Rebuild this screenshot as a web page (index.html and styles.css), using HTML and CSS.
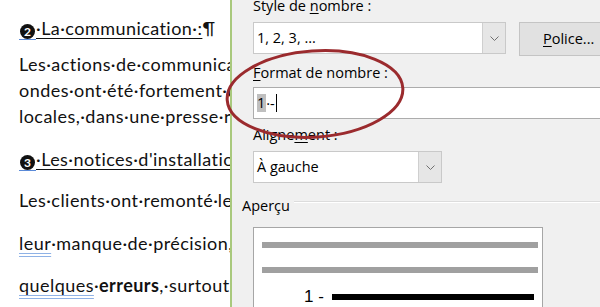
FILE: index.html
```html
<!DOCTYPE html>
<html lang="fr">
<head>
<meta charset="utf-8">
<title>Format de nombre</title>
<link rel="stylesheet" href="styles.css">
</head>
<body>
<div class="page">
  <div class="doc">
    <p class="head"><span class="ul"><span class="spell"><span class="num">2</span></span>·La·communication·:</span>¶</p>
    <div class="para first">
      <p>Les·actions·de·communication·ont·été·menées</p>
      <p>ondes·ont·été·fortement·diffusées·sur·les·radios</p>
      <p>locales,·dans·une·presse·régionale</p>
    </div>
    <p class="head h3"><span class="ul"><span class="spell"><span class="num">3</span></span>·Les·notices·d'installation·:</span>¶</p>
    <p class="para">Les·clients·ont·remonté·les·problèmes</p>
    <p class="para p2"><span class="gram">leur</span>·manque·de·précision,·sur·les</p>
    <p class="para p3"><span class="gram">quelques</span>·<b>erreurs</b>,·surtout·dans·les</p>
  </div>
  <div class="rule"></div>
  <div class="dialog">
    <div class="label l1">Style de <u>n</u>ombre :</div>
    <div class="row1">
      <div class="select s1">
        <span class="val">1, 2, 3, ...</span>
        <span class="arrow"><svg width="9" height="5" viewBox="0 0 9 5"><polyline points="0.5,0.5 4.5,4.5 8.5,0.5" fill="none" stroke="#707070" stroke-width="1"/></svg></span>
      </div>
      <div class="btn"><u>P</u>olice...</div>
    </div>
    <div class="label l2"><u>F</u>ormat de nombre :</div>
    <div class="input"><span class="sel">1</span><span class="dot">·</span>-<span class="caret"></span></div>
    <div class="label l3">Aligne<u>m</u>ent :</div>
    <div class="select s2">
      <span class="val">À gauche</span>
      <span class="arrow"><svg width="9" height="5" viewBox="0 0 9 5"><polyline points="0.5,0.5 4.5,4.5 8.5,0.5" fill="none" stroke="#707070" stroke-width="1"/></svg></span>
    </div>
    <div class="group"><span class="legend">Aperçu</span><span class="gline"></span></div>
    <div class="preview">
      <div class="bar"></div>
      <div class="bar"></div>
      <div class="numrow"><span class="n">1 -</span><span class="blackbar"></span></div>
    </div>
  </div>
  <svg class="ellipse" width="600" height="307" viewBox="0 0 600 307">
    <ellipse cx="315" cy="94" rx="88" ry="43" transform="rotate(-4 315 94)" fill="none" stroke="#9b2b2e" stroke-width="3"/>
  </svg>
</div>
</body>
</html>
```
FILE: styles.css
```css
html, body {
  margin: 0;
  padding: 0;
}
body {
  width: 600px;
  height: 307px;
  overflow: hidden;
}
.page {
  position: relative;
  display: flex;
  width: 600px;
  height: 307px;
  overflow: hidden;
}
.doc {
  width: 230px;
  flex: none;
  height: 307px;
  background: #fff;
  overflow: hidden;
  box-sizing: border-box;
  padding: 15px 0 0 19px;
  font-family: Lato, "Liberation Sans", sans-serif;
  font-size: 18px;
  letter-spacing: 0.45px;
  line-height: 26px;
  white-space: nowrap;
  color: #111;
}
.doc p {
  margin: 0;
}
.doc .para {
  margin-top: 15px;
}
.doc .first {
  margin-top: 10px;
}
.doc .h3 {
  margin-top: 17px;
}
.doc .p2 {
  margin-top: 17px;
}
.doc .p3 {
  margin-top: 16px;
}
.ul {
  text-decoration: underline;
  text-decoration-thickness: 1px;
  text-underline-offset: 3px;
}
.spell {
  display: inline-block;
  border-bottom: 1px solid #5a8ad8;
  line-height: 16px;
  margin-bottom: -1px;
}
.num {
  display: inline-flex;
  align-items: center;
  justify-content: center;
  width: 15px;
  height: 15px;
  border-radius: 50%;
  background: #111;
  color: #fff;
  font-size: 12px;
  font-weight: 700;
  letter-spacing: 0;
  line-height: 15px;
  vertical-align: -1px;
  margin: 0 1px 0 1px;
}
.gram {
  text-decoration: underline double #8fb2e6;
  text-underline-offset: 3px;
}
.rule {
  width: 2px;
  flex: none;
  background: #a9c97d;
}
.dialog {
  flex: 1;
  background: #f0f0f0;
  padding-left: 21px;
  font-family: "Open Sans", "Noto Sans", sans-serif;
  font-size: 14.5px;
  color: #000;
  overflow: hidden;
  white-space: nowrap;
}
.label {
  line-height: 20px;
  height: 20px;
}
.label u {
  text-underline-offset: 2px;
}
.l1 {
  margin-top: -4px;
}
.row1 {
  display: flex;
  align-items: flex-start;
  margin-top: 6px;
}
.select {
  display: flex;
  align-items: stretch;
  box-sizing: border-box;
  height: 32px;
  background: #fff;
  border: 1px solid #c9c9c9;
}
.s1 {
  width: 253px;
  flex: none;
}
.s2 {
  width: 189px;
  margin-top: 6px;
}
.val {
  flex: 1;
  padding-left: 3px;
  line-height: 30px;
}
.arrow {
  width: 22px;
  background: #e6e6e6;
  border-left: 1px solid #cfcfcf;
  display: flex;
  align-items: center;
  justify-content: center;
}
.btn {
  margin-left: 13px;
  box-sizing: border-box;
  height: 34px;
  width: 120px;
  flex: none;
  background: #e1e1e1;
  border: 1px solid #c4c4c4;
  padding-left: 23px;
  line-height: 32px;
}
.btn u {
  text-underline-offset: 2px;
}
.l2 {
  margin-top: 7px;
}
.input {
  margin-top: 4px;
  box-sizing: border-box;
  height: 32px;
  width: 360px;
  background: #fff;
  border: 1px solid #acacac;
  display: flex;
  align-items: center;
  padding-left: 3px;
}
.sel {
  background: #bfbfbf;
  line-height: 18px;
  padding: 0 1px 0 0;
}
.dot {
  padding: 0;
}
.caret {
  width: 1px;
  height: 18px;
  background: #000;
  margin-left: 1px;
}
.l3 {
  margin-top: 6px;
}
.group {
  display: flex;
  align-items: center;
  margin-top: 13px;
  margin-left: -11px;
  height: 20px;
  line-height: 20px;
}
.gline {
  flex: 1;
  height: 1px;
  margin-left: 4px;
  background: #dcdcdc;
  border-bottom: 1px solid #fff;
  margin-top: -8px;
}
.preview {
  margin-top: 11px;
  box-sizing: border-box;
  width: 290px;
  height: 100px;
  background: #fff;
  border: 1px solid #a6a6a6;
  padding: 14px 4px 0 8px;
}
.bar {
  height: 6px;
  background: #a0a0a0;
  margin-bottom: 19px;
}
.numrow {
  display: flex;
  align-items: center;
  padding-left: 42px;
  margin-top: -5px;
  font-family: "Liberation Sans", Arial, sans-serif;
  font-size: 17px;
  line-height: 20px;
}
.n {
  width: 28px;
}
.blackbar {
  width: 202px;
  height: 6px;
  background: #000;
}
.ellipse {
  position: absolute;
  left: 0;
  top: 0;
  pointer-events: none;
}
```
